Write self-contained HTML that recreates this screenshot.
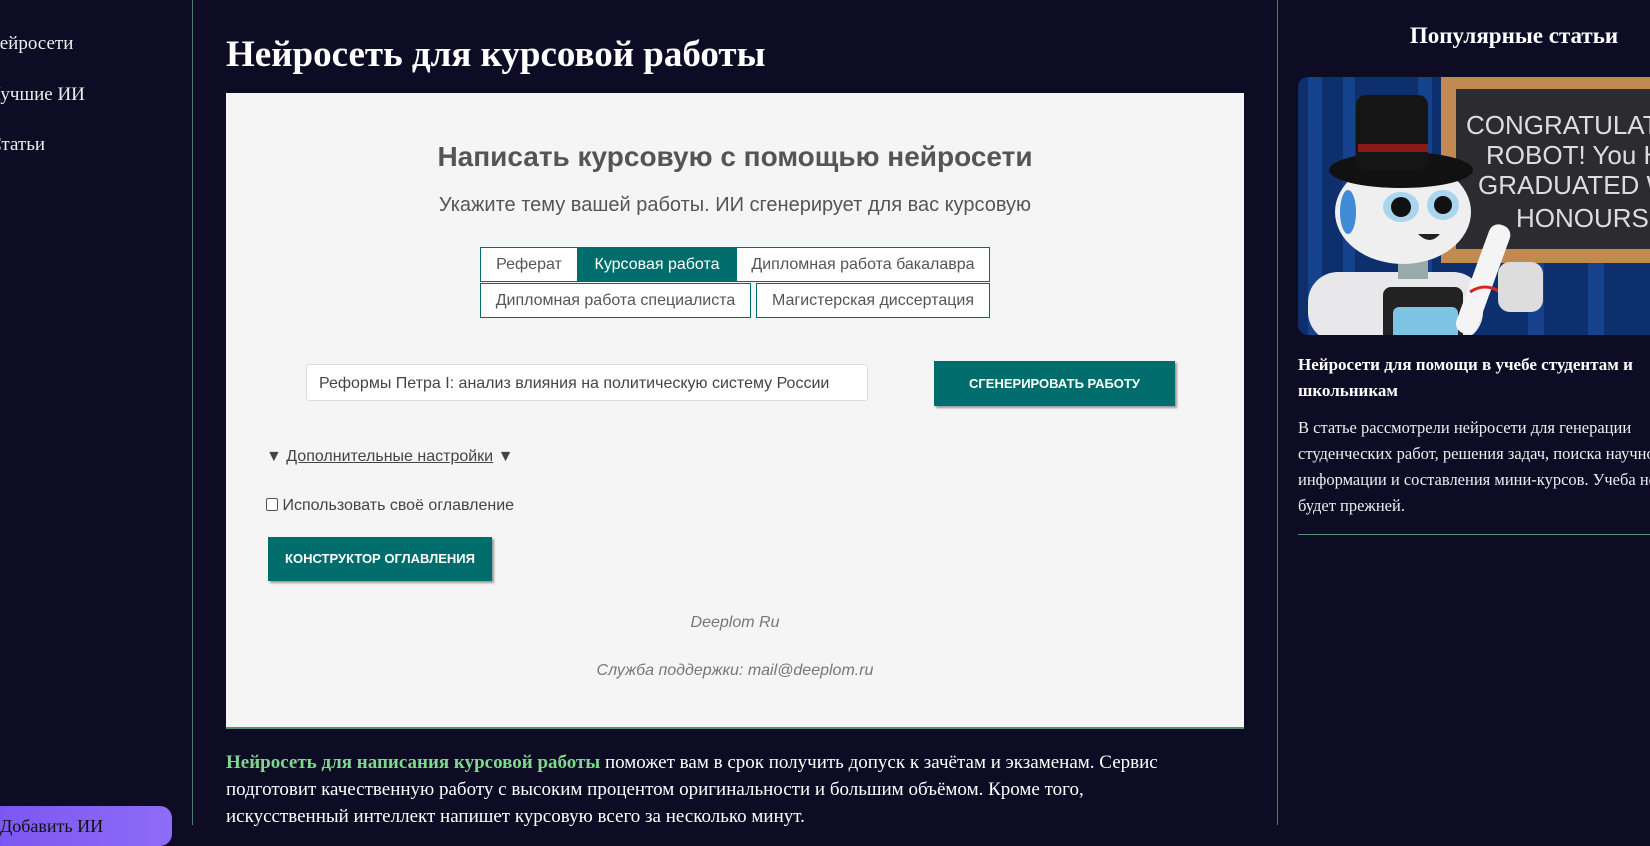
<!DOCTYPE html>
<html><head><meta charset="utf-8"><style>
*{margin:0;padding:0;box-sizing:border-box}
body{width:1650px;height:825px;overflow:hidden;background:#0e0b25;position:relative;font-family:"Liberation Serif",serif;color:#fff}
.abs{position:absolute;white-space:nowrap}
.nav{font-size:19px;color:#eee}
.vline{position:absolute;top:0;width:1px;height:825px;background:#4d7a6c}
h1{position:absolute;left:226px;top:33px;font-size:37px;font-weight:bold;color:#fff}
.card{position:absolute;left:226px;top:93px;width:1018px;height:636px;background:#f5f5f5;border-bottom:2px solid #5a8b73;font-family:"Liberation Sans",sans-serif;color:#555}
.card .c{position:absolute;left:0;width:100%;text-align:center}
.tab{position:absolute;border:1px solid #006d6d;background:#fff;color:#555;font-size:16px;text-align:center;line-height:33px}
.tab.on{background:#006d6d;color:#fff}
.btn{position:absolute;background:#006d6d;color:#fff;font-weight:bold;font-size:13px;text-align:center;box-shadow:2px 2px 2px #999}
p.txt{position:absolute;left:226px;top:749px;width:975px;font-size:19px;line-height:27px;color:#fff}
</style></head><body>
<div class="abs nav" style="left:-14px;top:33px">Нейросети</div>
<div class="abs nav" style="left:-12px;top:84px">Лучшие ИИ</div>
<div class="abs nav" style="left:-11px;top:134px">Статьи</div>
<div class="abs" style="left:-10px;top:806px;width:182px;height:40px;border-radius:12px;background:linear-gradient(90deg,#7b55f0,#8d6cf7);color:#111;font-size:18px;padding:10px 0 0 10px">Добавить ИИ</div>
<div class="vline" style="left:192px"></div>
<div class="vline" style="left:1277px"></div>

<h1>Нейросеть для курсовой работы</h1>
<div class="card">
 <div class="c" style="top:48px;font-size:28px;font-weight:bold">Написать курсовую с помощью нейросети</div>
 <div class="c" style="top:101px;font-size:20px">Укажите тему вашей работы. ИИ сгенерирует для вас курсовую</div>
 <div class="tab" style="left:254px;top:154px;width:98px;height:35px">Реферат</div>
 <div class="tab on" style="left:351px;top:154px;width:160px;height:35px">Курсовая работа</div>
 <div class="tab" style="left:510px;top:154px;width:254px;height:35px">Дипломная работа бакалавра</div>
 <div class="tab" style="left:254px;top:190px;width:271px;height:35px">Дипломная работа специалиста</div>
 <div class="tab" style="left:530px;top:190px;width:234px;height:35px">Магистерская диссертация</div>
 <div style="position:absolute;left:80px;top:271px;width:562px;height:37px;background:#fff;border:1px solid #ddd;border-radius:3px;font-size:16px;color:#444;padding:10px 12px;white-space:nowrap">Реформы Петра I: анализ влияния на политическую систему России</div>
 <div class="btn" style="left:708px;top:268px;width:241px;height:45px;line-height:45px">СГЕНЕРИРОВАТЬ РАБОТУ</div>
 <div class="abs" style="left:40px;top:355px;font-size:16px;color:#444">▼ <u>Дополнительные настройки</u> ▼</div>
 <div class="abs" style="left:40px;top:404px;font-size:16px;color:#444"><span style="display:inline-block;width:12px;height:13px;border:1px solid #555;border-radius:2px;vertical-align:-1px;background:#fff"></span> Использовать своё оглавление</div>
 <div class="btn" style="left:42px;top:444px;width:224px;height:44px;line-height:44px">КОНСТРУКТОР ОГЛАВЛЕНИЯ</div>
 <div class="c" style="top:521px;font-size:16px;font-style:italic;color:#777">Deeplom Ru</div>
 <div class="c" style="top:569px;font-size:16px;font-style:italic;color:#777">Служба поддержки: mail@deeplom.ru</div>
</div>
<p class="txt"><b style="color:#7fd98c">Нейросеть для написания курсовой работы</b> поможет вам в срок получить допуск к зачётам и экзаменам. Сервис подготовит качественную работу с высоким процентом оригинальности и большим объёмом. Кроме того, искусственный интеллект напишет курсовую всего за несколько минут.</p>

<div class="abs" style="left:1298px;top:23px;width:432px;text-align:center;font-size:23px;font-weight:bold">Популярные статьи</div>
<svg style="position:absolute;left:1298px;top:77px" width="352" height="258" viewBox="0 0 352 258">
 <defs><clipPath id="r"><rect width="400" height="258" rx="10"/></clipPath></defs>
 <g clip-path="url(#r)">
 <rect width="352" height="258" fill="#0d2f6e"/>
 <g fill="#1a4a9a" opacity=".7"><rect x="10" width="14" height="258"/><rect x="45" width="12" height="258"/><rect x="120" width="14" height="258"/><rect x="230" y="180" width="16" height="78"/><rect x="290" y="180" width="16" height="78"/></g>
 <rect x="143" y="0" width="215" height="186" fill="#c08a50"/>
 <rect x="158" y="12" width="200" height="160" fill="#2b2b30"/>
 <g fill="#ddd" font-family="Liberation Sans,sans-serif" font-size="26">
  <text x="168" y="57">CONGRATULATI</text><text x="188" y="87">ROBOT! You HA</text><text x="180" y="117">GRADUATED W</text><text x="218" y="150">HONOURS</text></g>
 <rect x="10" y="195" width="175" height="70" rx="30" fill="#e8e8ea"/>
 <rect x="85" y="210" width="80" height="55" rx="8" fill="#222"/>
 <rect x="95" y="230" width="65" height="35" rx="6" fill="#7cc3e6"/>
 <rect x="100" y="180" width="30" height="22" fill="#9aa"/>
 <ellipse cx="105" cy="135" rx="68" ry="52" fill="#efefef"/>
 <ellipse cx="50" cy="135" rx="8" ry="22" fill="#3f8bd8"/>
 <ellipse cx="103" cy="130" rx="18" ry="15" fill="#a9d6ee"/><circle cx="103" cy="130" r="10" fill="#111"/>
 <ellipse cx="145" cy="128" rx="16" ry="15" fill="#a9d6ee"/><circle cx="145" cy="128" r="9" fill="#111"/>
 <path d="M120 157 q12 12 22 0 z" fill="#222"/>
 <ellipse cx="103" cy="93" rx="72" ry="18" fill="#111"/>
 <rect x="58" y="18" width="72" height="75" rx="10" fill="#151515"/>
 <rect x="60" y="67" width="70" height="8" fill="#8a1a1a"/>
 <rect x="175" y="145" width="22" height="115" rx="10" fill="#f4f4f4" transform="rotate(20 186 200)"/>
 <path d="M172 215 q15 -10 30 0" stroke="#d22" stroke-width="3" fill="none"/>
 <rect x="200" y="185" width="45" height="50" rx="12" fill="#ddd"/>
 </g>
</svg>
<div class="abs" style="left:1298px;top:352px;font-size:17px;font-weight:bold;line-height:26px;white-space:normal;width:420px">Нейросети для помощи в учебе студентам и школьникам</div>
<div class="abs" style="left:1298px;top:415px;font-size:16.5px;line-height:26px;white-space:normal;width:370px;color:#eee">В статье рассмотрели нейросети для генерации студенческих работ, решения задач, поиска научной информации и составления мини-курсов. Учеба не будет прежней.</div>
<div style="position:absolute;left:1298px;top:534px;width:352px;height:1px;background:#5a8b73"></div>
</body></html>
